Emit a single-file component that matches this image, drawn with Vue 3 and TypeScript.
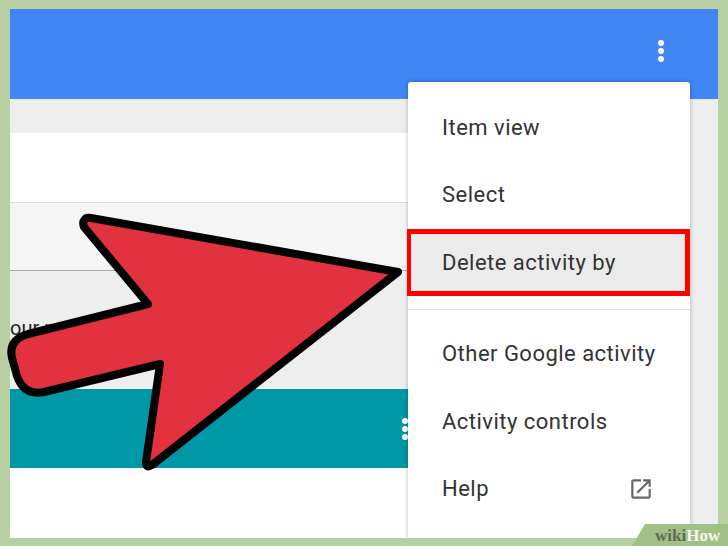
<script setup lang="ts">
const topItems: { label: string; active?: boolean }[] = [
  { label: 'Item view' },
  { label: 'Select' },
  { label: 'Delete activity by', active: true },
]
const bottomItems: string[] = ['Other Google activity', 'Activity controls']
</script>

<template>
  <div class="page">
    <div class="stage">
      <header class="topbar">
        <span class="kebab light"><i></i><i></i><i></i></span>
      </header>
      <div class="content">
        <div class="spacer"></div>
        <div class="blank"></div>
        <div class="field"></div>
        <div class="hint"><span>our n</span></div>
        <div class="teal">
          <span class="kebab"><i></i><i></i><i></i></span>
        </div>
        <div class="blank-end"></div>
      </div>

      <nav class="menu">
        <div
          v-for="item in topItems"
          :key="item.label"
          class="item"
          :class="{ active: item.active }"
        >{{ item.label }}</div>
        <div class="divider"></div>
        <div v-for="label in bottomItems" :key="label" class="item">{{ label }}</div>
        <div class="item help">
          <span>Help</span>
          <svg class="ext" viewBox="0 0 24 24" width="26" height="26">
            <path d="M19 19H5V5h7V3H5c-1.11 0-2 .9-2 2v14c0 1.1.89 2 2 2h14c1.1 0 2-.9 2-2v-7h-2v7zM14 3v2h3.59l-9.83 9.83 1.41 1.41L19 6.41V10h2V3h-7z" />
          </svg>
        </div>
      </nav>
    </div>

    <svg class="arrow" viewBox="0 0 728 546" width="728" height="546">
      <path
        d="M85 219 Q86 217 91 218 L398 272 L152 465 Q146 469 146 462 L160 364 L44 392 Q24 396 17 376 L12 358 Q8 340 28 334 L148 304 L84 227 Q82 222 85 219 Z"
      />
    </svg>

    <div class="brand"><b class="wiki">wiki</b><b class="how">How</b></div>
  </div>
</template>

<style>
html, body { margin: 0; background: #b8cfa2; }
</style>

<style scoped>
.page {
  position: relative;
  width: 728px;
  height: 546px;
  padding: 9px 10px 8px;
  box-sizing: border-box;
  background: #b8cfa2;
  overflow: hidden;
  font-family: Roboto, "Liberation Sans", sans-serif;
}
.stage {
  position: relative;
  height: 529px;
  background: #eeeeee;
  overflow: hidden;
  display: flex;
  flex-direction: column;
}
.topbar {
  height: 90px;
  flex: none;
  background: #4285f4;
  display: flex;
  justify-content: flex-end;
  align-items: center;
  padding: 0 54px 6px 0;
  box-sizing: border-box;
}
.kebab {
  display: flex;
  flex-direction: column;
  gap: 2px;
}
.kebab i {
  width: 6px;
  height: 6px;
  border-radius: 50%;
  background: #fff;
}
.content {
  flex: 1;
  display: flex;
  flex-direction: column;
  margin-right: 28px;
}
.spacer { height: 34px; }
.blank { height: 69px; background: #fff; }
.field {
  height: 69px;
  box-sizing: border-box;
  background: #f5f5f5;
  border-top: 1px solid #dddddd;
  border-bottom: 1px solid #a9a9a9;
}
.hint {
  height: 118px;
  padding-top: 47px;
  box-sizing: border-box;
  font-size: 20px;
  line-height: 20px;
  color: #222;
}
.hint span { display: block; }
.teal {
  height: 79px;
  background: #0097a7;
  display: flex;
  align-items: center;
  justify-content: flex-end;
  padding-right: 282px;
  box-sizing: border-box;
}
.blank-end { flex: 1; background: #fff; }

.menu {
  position: absolute;
  left: 398px;
  top: 73px;
  width: 282px;
  bottom: -20px;
  background: #fff;
  border-radius: 3px;
  box-shadow: 0 0 4px rgba(0, 0, 0, 0.28);
  padding-top: 11.5px;
  box-sizing: border-box;
  color: #333;
}
.item {
  height: 67.5px;
  box-sizing: border-box;
  display: flex;
  align-items: center;
  padding: 0 36px 0 34px;
  font-size: 22px;
  letter-spacing: 0.48px;
  white-space: nowrap;
}
.item.active {
  margin-left: -1px;
  border: solid #ff0000;
  border-width: 5px 5px 5px 4px;
  padding-left: 31px;
  background: #ebebeb;
}
.divider {
  height: 1px;
  margin: 13px 0 10px;
  background: #e0e0e0;
}
.help { justify-content: space-between; }
.ext { fill: #666; flex: none; }

.arrow {
  position: absolute;
  left: 0;
  top: 0;
  pointer-events: none;
}
.arrow path {
  fill: #e23240;
  stroke: #000;
  stroke-width: 8;
  stroke-linejoin: round;
}
.brand {
  position: absolute;
  right: 0;
  bottom: 0;
  width: 96px;
  height: 22px;
  background: #a0c086;
  clip-path: polygon(13px 0, 100% 0, 100% 100%, 0 100%);
  box-sizing: border-box;
  padding-left: 23px;
  font-family: "Liberation Serif", serif;
  font-size: 17px;
  line-height: 23px;
  white-space: nowrap;
}
.wiki { color: #5f6b58; }
.how { color: #f3f7ee; }
</style>
